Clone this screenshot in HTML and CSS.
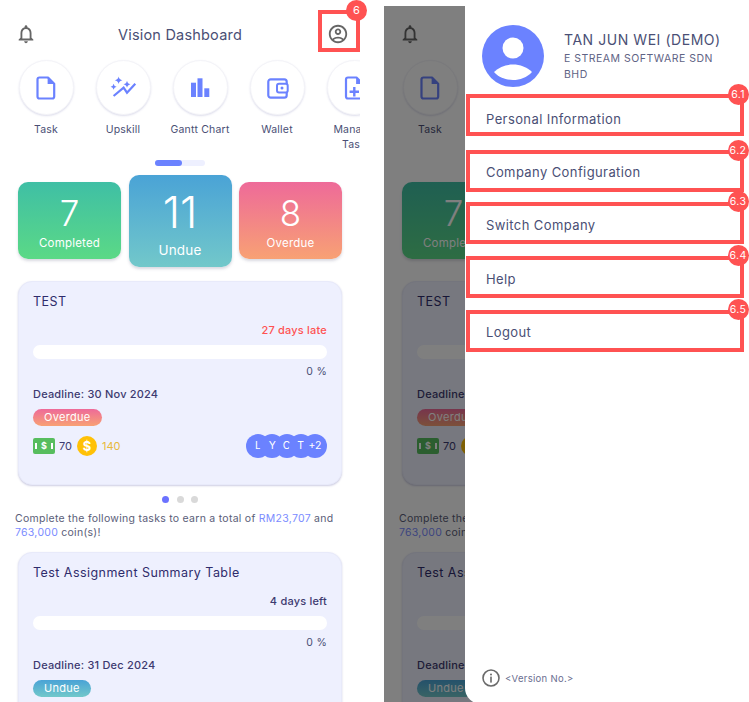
FILE: index.html
```html
<!DOCTYPE html>
<html lang="en">
<head>
  <meta charset="UTF-8">
  <title>Vision Dashboard</title>
  <link rel="stylesheet" href="styles.css">
</head>
<body>

  <!-- Shared icons -->
  <svg class="icon-defs" aria-hidden="true">
    <symbol id="i-bell" viewBox="0 0 24 24">
      <path d="M12 22c1.1 0 2-.9 2-2h-4c0 1.1.9 2 2 2zm6-6v-5c0-3.07-1.63-5.64-4.5-6.32V4c0-.83-.67-1.5-1.5-1.5s-1.5.67-1.5 1.5v.68C7.64 5.36 6 7.92 6 11v5l-2 2v1h16v-1l-2-2zm-2 1H8v-6c0-2.48 1.51-4.5 4-4.5s4 2.02 4 4.5v6z"/>
    </symbol>
    <symbol id="i-profile" viewBox="0 0 24 24">
      <path d="M12 2C6.48 2 2 6.48 2 12s4.48 10 10 10 10-4.48 10-10S17.52 2 12 2zM7.35 18.5C8.66 17.56 10.26 17 12 17s3.34.56 4.65 1.5c-1.31.94-2.91 1.5-4.65 1.5s-3.34-.56-4.65-1.5zm10.79-1.38C16.45 15.8 14.32 15 12 15s-4.45.8-6.14 2.12C4.7 15.73 4 13.95 4 12c0-4.42 3.58-8 8-8s8 3.58 8 8c0 1.95-.7 3.73-1.86 5.12z"/>
      <path d="M12 6c-1.93 0-3.5 1.57-3.5 3.5S10.07 13 12 13s3.5-1.57 3.5-3.5S13.93 6 12 6zm0 5c-.83 0-1.5-.67-1.5-1.5S11.17 8 12 8s1.5.67 1.5 1.5S12.83 11 12 11z"/>
    </symbol>
    <symbol id="i-task" viewBox="0 0 28 28">
      <path d="M7.5 3.5H16L22.2 9.7V22.5a2 2 0 0 1-2 2H7.5a2 2 0 0 1-2-2V5.5a2 2 0 0 1 2-2Z" fill="none" stroke="currentColor" stroke-width="2.2" stroke-linejoin="round"/>
      <path d="M15.6 3.5L22.2 10H15.6Z" fill="currentColor"/>
    </symbol>
    <symbol id="i-upskill" viewBox="0 0 28 28">
      <path d="M4.6 22L14.6 13.7L18 18.7L26.3 9.7" fill="none" stroke="currentColor" stroke-width="2.2"/>
      <path d="M9.6 2.5Q10.2 5.7 13.4 6.3Q10.2 6.9 9.6 10.1Q9 6.9 5.8 6.3Q9 5.7 9.6 2.5Z" fill="currentColor"/>
      <path d="M4.6 9.7Q5 12.3 7.6 12.7Q5 13.1 4.6 15.7Q4.2 13.1 1.6 12.7Q4.2 12.3 4.6 9.7Z" fill="currentColor"/>
      <path d="M18 6.8Q18.5 9.8 21.5 10.3Q18.5 10.8 18 13.8Q17.5 10.8 14.5 10.3Q17.5 9.8 18 6.8Z" fill="currentColor"/>
    </symbol>
    <symbol id="i-chart" viewBox="0 0 28 28">
      <rect x="5" y="8.7" width="5" height="14.3" fill="currentColor"/>
      <rect x="11.5" y="4.3" width="5" height="18.7" fill="currentColor"/>
      <rect x="18.3" y="14.3" width="5" height="8.7" fill="currentColor"/>
    </symbol>
    <symbol id="i-wallet" viewBox="0 0 28 28">
      <rect x="5.3" y="5.3" width="18.4" height="18.4" rx="2.4" fill="none" stroke="currentColor" stroke-width="2.2"/>
      <rect x="14" y="9.7" width="10.7" height="8.8" rx="2" fill="#fff" stroke="currentColor" stroke-width="2"/>
      <circle cx="19" cy="14.1" r="1.5" fill="currentColor"/>
    </symbol>
    <symbol id="i-add-file" viewBox="0 0 28 28">
      <path d="M8 3.5H16.5L22.7 9.7V22.5a2 2 0 0 1-2 2H8a2 2 0 0 1-2-2V5.5a2 2 0 0 1 2-2Z" fill="none" stroke="currentColor" stroke-width="2.2" stroke-linejoin="round"/>
      <path d="M16.1 3.5L22.7 10H16.1Z" fill="currentColor"/>
      <path d="M14.3 13V22.4M9.6 17.7H19" fill="none" stroke="currentColor" stroke-width="2.4"/>
    </symbol>
  </svg>

  <!-- Dashboard -->
  <div class="phone phone-left">
    <div class="screen">
      <div class="header">
        <svg class="bell"><use href="#i-bell"/></svg>
        <div class="title">Vision Dashboard</div>
        <svg class="profile"><use href="#i-profile"/></svg>
      </div>

      <div class="shortcuts">
        <div class="shortcut"><div class="circle"><svg><use href="#i-task"/></svg></div><span>Task</span></div>
        <div class="shortcut"><div class="circle"><svg><use href="#i-upskill"/></svg></div><span>Upskill</span></div>
        <div class="shortcut"><div class="circle"><svg><use href="#i-chart"/></svg></div><span>Gantt Chart</span></div>
        <div class="shortcut"><div class="circle"><svg><use href="#i-wallet"/></svg></div><span>Wallet</span></div>
        <div class="shortcut"><div class="circle"><svg><use href="#i-add-file"/></svg></div><span>Manage Task</span></div>
      </div>

      <div class="scrollbar"><div class="scrollbar-fill"></div></div>

      <div class="stats">
        <div class="stat stat-completed"><div class="stat-num">7</div><div class="stat-label">Completed</div></div>
        <div class="stat stat-undue"><div class="stat-num">11</div><div class="stat-label">Undue</div></div>
        <div class="stat stat-overdue"><div class="stat-num">8</div><div class="stat-label">Overdue</div></div>
      </div>

      <div class="card">
        <div class="card-title">TEST</div>
        <div class="time late">27 days late</div>
        <div class="bar"></div>
        <div class="percent">0 %</div>
        <div class="deadline">Deadline: 30 Nov 2024</div>
        <div class="pill pill-overdue">Overdue</div>
        <div class="rewards">
          <div class="cash"><i></i><b>$</b><i></i></div>
          <span class="amount">70</span>
          <div class="coin">$</div>
          <span class="coins">140</span>
          <div class="people">
            <span>L</span><span>Y</span><span>C</span><span>T</span><span>+2</span>
          </div>
        </div>
      </div>

      <div class="dots"><span class="dot dot-on"></span><span class="dot"></span><span class="dot"></span></div>

      <p class="earn">Complete the following tasks to earn a total of <em>RM23,707</em> and <em>763,000</em> coin(s)!</p>

      <div class="card">
        <div class="card-title">Test Assignment Summary Table</div>
        <div class="time">4 days left</div>
        <div class="bar"></div>
        <div class="percent">0 %</div>
        <div class="deadline">Deadline: 31 Dec 2024</div>
        <div class="pill pill-undue">Undue</div>
      </div>
    </div>

    <div class="mark mark-profile"></div>
    <div class="badge badge-profile">6</div>
  </div>

  <!-- Dashboard with the profile drawer open -->
  <div class="phone phone-right">
    <div class="screen">
      <div class="header">
        <svg class="bell"><use href="#i-bell"/></svg>
        <div class="title">Vision Dashboard</div>
        <svg class="profile"><use href="#i-profile"/></svg>
      </div>

      <div class="shortcuts">
        <div class="shortcut"><div class="circle"><svg><use href="#i-task"/></svg></div><span>Task</span></div>
        <div class="shortcut"><div class="circle"><svg><use href="#i-upskill"/></svg></div><span>Upskill</span></div>
      </div>

      <div class="scrollbar"><div class="scrollbar-fill"></div></div>

      <div class="stats">
        <div class="stat stat-completed"><div class="stat-num">7</div><div class="stat-label">Completed</div></div>
        <div class="stat stat-undue"><div class="stat-num">11</div><div class="stat-label">Undue</div></div>
        <div class="stat stat-overdue"><div class="stat-num">8</div><div class="stat-label">Overdue</div></div>
      </div>

      <div class="card">
        <div class="card-title">TEST</div>
        <div class="time late">27 days late</div>
        <div class="bar"></div>
        <div class="percent">0 %</div>
        <div class="deadline">Deadline: 30 Nov 2024</div>
        <div class="pill pill-overdue">Overdue</div>
        <div class="rewards">
          <div class="cash"><i></i><b>$</b><i></i></div>
          <span class="amount">70</span>
          <div class="coin">$</div>
          <span class="coins">140</span>
        </div>
      </div>

      <div class="dots"><span class="dot dot-on"></span><span class="dot"></span><span class="dot"></span></div>

      <p class="earn">Complete the following tasks to earn a total of <em>RM23,707</em> and <em>763,000</em> coin(s)!</p>

      <div class="card">
        <div class="card-title">Test Assignment Summary Table</div>
        <div class="time">4 days left</div>
        <div class="bar"></div>
        <div class="percent">0 %</div>
        <div class="deadline">Deadline: 31 Dec 2024</div>
        <div class="pill pill-undue">Undue</div>
      </div>
    </div>

    <div class="dim"></div>

    <div class="drawer">
      <div class="user">
        <svg class="avatar" viewBox="0 0 62 62">
          <circle cx="31" cy="31" r="31" fill="#6b82ff"/>
          <circle cx="31" cy="23" r="10.5" fill="#fff"/>
          <path d="M12 47C17 42 24 39.5 31 39.5S45 42 50 47C45 52.5 38 55 31 55S17 52.5 12 47Z" fill="#fff"/>
        </svg>
        <div class="user-info">
          <div class="user-name">TAN JUN WEI (DEMO)</div>
          <div class="user-company">E STREAM SOFTWARE SDN BHD</div>
        </div>
      </div>

      <div class="menu">
        <div class="menu-item">Personal Information<div class="mark mark-1"></div><div class="badge badge-menu badge-1">6.1</div></div>
        <div class="menu-item">Company Configuration<div class="mark mark-2"></div><div class="badge badge-menu badge-2">6.2</div></div>
        <div class="menu-item">Switch Company<div class="mark mark-3"></div><div class="badge badge-menu badge-3">6.3</div></div>
        <div class="menu-item">Help<div class="mark mark-4"></div><div class="badge badge-menu badge-4">6.4</div></div>
        <div class="menu-item">Logout<div class="mark mark-5"></div><div class="badge badge-menu badge-5">6.5</div></div>
      </div>

      <div class="version">
        <svg viewBox="0 0 18 18">
          <circle cx="9" cy="9" r="8" fill="none" stroke="#6a6a6a" stroke-width="1.6"/>
          <circle cx="9" cy="5.4" r="1" fill="#6a6a6a"/>
          <rect x="8.2" y="7.6" width="1.6" height="6" fill="#6a6a6a"/>
        </svg>
        <span>&lt;Version No.&gt;</span>
      </div>
    </div>
  </div>

</body>
</html>
```

FILE: styles.css
```css
* {
  box-sizing: border-box;
}

html, body {
  height: 702px;
  overflow: hidden;
}

body {
  margin: 0;
  display: flex;
  gap: 24px;
  background-color: #fff;
  font-family: Inter, "Noto Sans", sans-serif;
  color: #4a4f75;
}

.icon-defs {
  display: none;
}

.phone {
  position: relative;
  flex: none;
  height: 696px;
  margin-top: 6px;
}

.phone-left {
  width: 360px;
}

.phone-right {
  width: 365px;
}

.screen {
  width: 360px;
  height: 696px;
  overflow: hidden;
}

/* Header */
.header {
  display: flex;
  align-items: center;
  justify-content: space-between;
  height: 54px;
  padding: 2px 11px 0 15px;
}

.bell {
  width: 22px;
  height: 22px;
  fill: #666;
}

.title {
  margin-right: 4px;
  font-size: 14.5px;
  letter-spacing: 0.2px;
}

.profile {
  width: 22px;
  height: 22px;
  fill: #666;
}

/* Shortcuts */
.shortcuts {
  display: flex;
  padding-left: 7.5px;
}

.shortcut {
  flex: none;
  width: 77px;
  text-align: center;
  font-size: 10.5px;
  line-height: 15px;
  letter-spacing: 0.2px;
  height: 91.5px;
}

.circle {
  display: flex;
  align-items: center;
  justify-content: center;
  width: 55px;
  height: 55px;
  margin: 0 auto 6.5px;
  border-radius: 50%;
  background-color: #fff;
  border: 1px solid #f4f4f8;
  box-shadow: 0 1px 2px rgba(90, 90, 160, 0.2);
  color: #6b82ff;
}

.circle svg {
  width: 28px;
  height: 28px;
}

.shortcut span {
  display: block;
  padding: 0 14px;
}

.shortcut:nth-child(3) span {
  padding: 0;
}

.scrollbar {
  width: 50px;
  height: 6px;
  margin: 8.5px auto 0;
  border-radius: 3px;
  background-color: #eef0ff;
}

.scrollbar-fill {
  width: 27px;
  height: 6px;
  border-radius: 3px;
  background-color: #6b82ff;
}

/* Stat cards */
.stats {
  display: flex;
  align-items: center;
  gap: 7.5px;
  margin: 9px 0 13.7px 18px;
}

.stat {
  width: 103px;
  height: 77px;
  margin-bottom: 1px;
  padding-top: 12px;
  border-radius: 10px;
  color: #fff;
  text-align: center;
  box-shadow: 0 2px 3px rgba(80, 80, 120, 0.22);
}

.stat-num {
  font-size: 35px;
  line-height: 38px;
  font-weight: 300;
}

.stat-label {
  margin-top: 4px;
  font-size: 11.5px;
  line-height: 14px;
  letter-spacing: 0.2px;
}

.stat-completed {
  background: linear-gradient(#3fbfa5, #5bd986);
}

.stat-undue {
  height: 92px;
  margin-bottom: 0;
  padding-top: 13px;
  background: linear-gradient(#4aa3d6, #72c8ca);
}

.stat-undue .stat-num {
  font-size: 44px;
  line-height: 48px;
}

.stat-undue .stat-label {
  margin-top: 6px;
  font-size: 13.5px;
  line-height: 16px;
}

.stat-overdue {
  background: linear-gradient(#ee6a99, #f8a174);
}

/* Task cards */
.card {
  width: 324px;
  height: 204.5px;
  margin-left: 18px;
  padding: 11px 14px 0;
  border: 1px solid #e8eafa;
  border-radius: 14px;
  background-color: #eef0fe;
  box-shadow: 0 1px 2px rgba(90, 90, 160, 0.3);
}

.card-title {
  font-size: 12.5px;
  line-height: 18px;
  letter-spacing: 0.45px;
  color: #2f2c6c;
}

.time {
  margin-top: 12px;
  font-size: 11px;
  line-height: 14px;
  font-weight: 500;
  letter-spacing: 0.2px;
  text-align: right;
  color: #3d3a70;
}

.late {
  color: #ff5252;
}

.bar {
  height: 14px;
  margin-top: 8.5px;
  border-radius: 7px;
  background-color: #fff;
}

.percent {
  margin-top: 6px;
  font-size: 10.5px;
  line-height: 14px;
  letter-spacing: 0.3px;
  text-align: right;
}

.deadline {
  margin-top: 8px;
  font-size: 11px;
  line-height: 14px;
  font-weight: 500;
  letter-spacing: 0.2px;
  color: #3d3a70;
}

.pill {
  display: table;
  height: 17px;
  margin-top: 8px;
  padding: 0 11px;
  border-radius: 9px;
  color: #fff;
  font-size: 11px;
  line-height: 17px;
  letter-spacing: 0.3px;
}

.pill-overdue {
  background: linear-gradient(#ee6a99, #f8a174);
}

.pill-undue {
  background: linear-gradient(#4aa3d6, #72c8ca);
}

.rewards {
  display: flex;
  align-items: center;
  height: 24px;
  margin-top: 7.5px;
  font-size: 11px;
}

.cash {
  display: flex;
  align-items: center;
  justify-content: space-around;
  width: 22px;
  height: 16px;
  border-radius: 2px;
  background-color: #57bd5e;
  color: #fff;
  font-size: 9px;
}

.cash i {
  width: 2px;
  height: 6px;
  background-color: #fff;
}

.amount {
  margin-left: 4px;
  color: #3d3a70;
}

.coin {
  width: 20px;
  height: 20px;
  margin-left: 5px;
  border-radius: 50%;
  background-color: #ffc107;
  color: #fff;
  font-size: 13px;
  font-weight: 700;
  line-height: 20px;
  text-align: center;
}

.coins {
  margin-left: 5px;
  color: #e8b93a;
}

.people {
  display: flex;
  margin-left: auto;
}

.people span {
  width: 24px;
  height: 24px;
  margin-left: -9.75px;
  border-radius: 50%;
  background-color: #6b82ff;
  color: #fff;
  font-size: 10.5px;
  line-height: 24px;
  text-align: center;
}

.dots {
  display: flex;
  justify-content: center;
  gap: 7.5px;
  margin-top: 10.5px;
}

.dot {
  width: 7px;
  height: 7px;
  border-radius: 50%;
  background-color: #d9d9d9;
}

.dot-on {
  background-color: #6b72ff;
}

.earn {
  width: 330px;
  margin: 9.5px 0 11.7px 15px;
  font-size: 10.5px;
  line-height: 14px;
  letter-spacing: 0.27px;
  color: #5a5d78;
}

.earn em {
  font-style: normal;
  color: #7b8cff;
}

/* Annotations */
.mark {
  position: absolute;
  border: 4px solid #ff5252;
}

.badge {
  position: absolute;
  width: 21px;
  height: 21px;
  border-radius: 50%;
  background-color: #ff5252;
  color: #fff;
  font-size: 11px;
  line-height: 21px;
  text-align: center;
}

.mark-profile {
  left: 318px;
  top: 4px;
  width: 42px;
  height: 42px;
}

.badge-profile {
  left: 346px;
  top: -6.5px;
}

/* Drawer */
.dim {
  position: absolute;
  inset: 0;
  background-color: rgba(0, 0, 0, 0.5);
}

.drawer {
  position: absolute;
  left: 81px;
  top: 0;
  right: 0;
  height: 698px;
  display: flex;
  flex-direction: column;
  border-radius: 0 0 0 16px;
  background-color: #fff;
}

.user {
  display: flex;
  gap: 20px;
  height: 87px;
  padding: 19px 0 0 17px;
}

.avatar {
  flex: none;
  width: 62px;
  height: 62px;
}

.user-info {
  width: 165px;
  padding-top: 5px;
}

.user-name {
  font-size: 14px;
  line-height: 19px;
  letter-spacing: 0.55px;
  white-space: nowrap;
}

.user-company {
  margin-top: 2px;
  font-size: 10.5px;
  line-height: 15.5px;
  letter-spacing: 0.5px;
  color: #5f6385;
}

.menu-item {
  position: relative;
  height: 53.2px;
  padding-left: 21px;
  font-size: 13px;
  line-height: 53.2px;
  letter-spacing: 0.4px;
}

.menu-item .mark {
  left: 1px;
  width: 278px;
  height: 42px;
}

.mark-1 {
  top: 1px;
}

.mark-2 {
  top: 3.8px;
}

.mark-3 {
  top: 2.6px;
}

.mark-4 {
  top: 3.4px;
}

.mark-5 {
  top: 4.2px;
}

.badge-menu {
  left: 262.5px;
  font-size: 10.5px;
}

.badge-1 {
  top: -9.5px;
}

.badge-2 {
  top: -6.7px;
}

.badge-3 {
  top: -7.9px;
}

.badge-4 {
  top: -7.1px;
}

.badge-5 {
  top: -6.3px;
}

.version {
  display: flex;
  align-items: center;
  gap: 5px;
  margin-top: auto;
  padding: 0 0 17px 17px;
  font-size: 9.5px;
  letter-spacing: 0.3px;
  color: #6a6e90;
}

.version svg {
  width: 18px;
  height: 18px;
}
```
